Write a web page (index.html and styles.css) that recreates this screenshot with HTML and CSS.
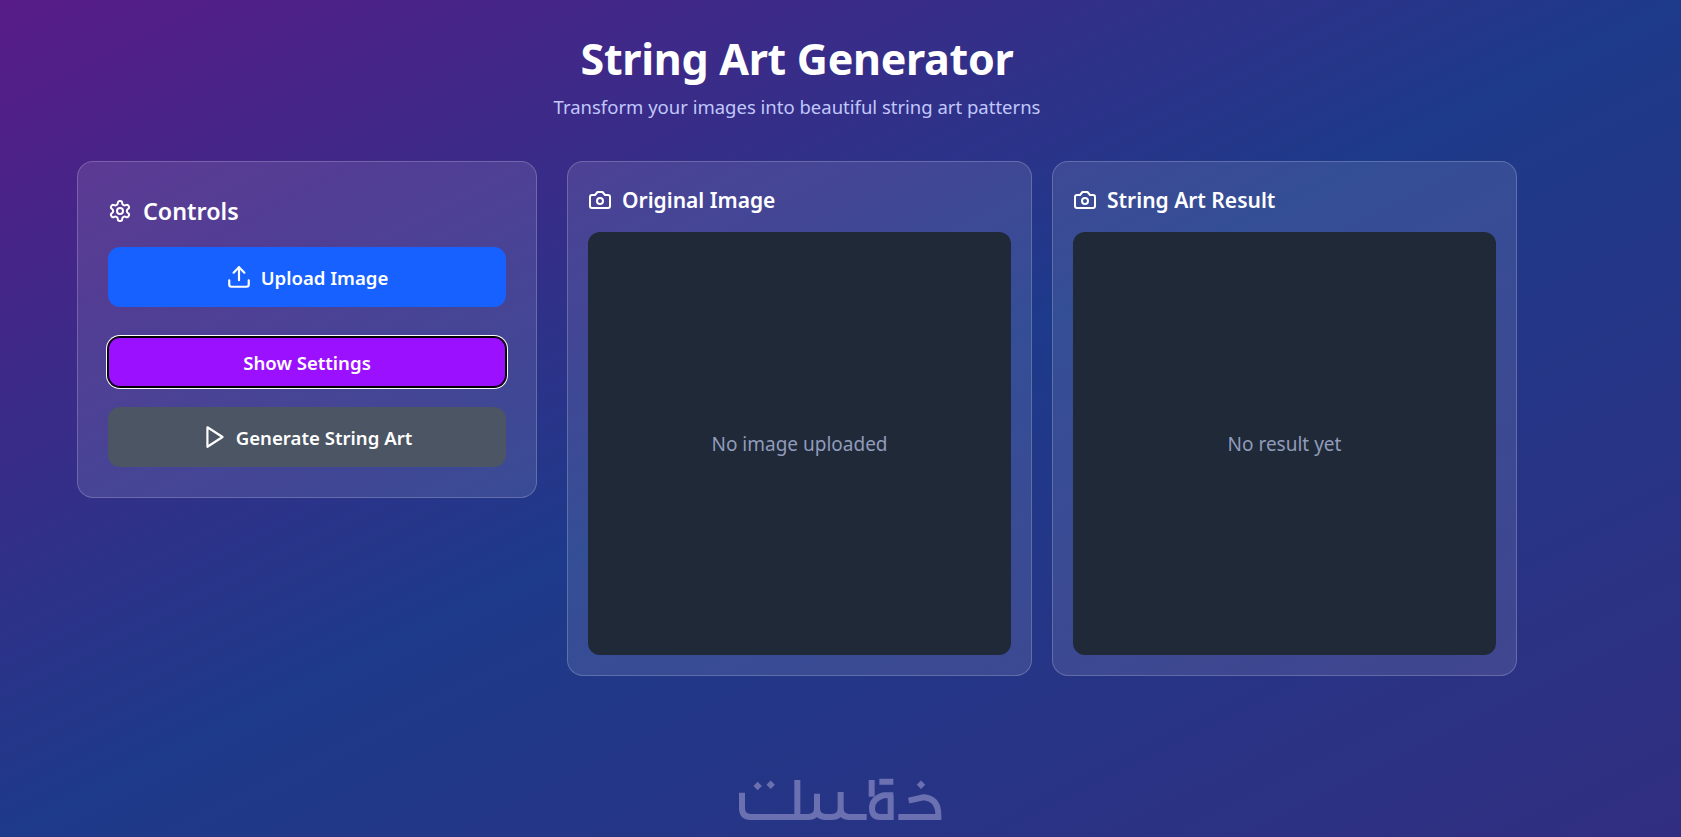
FILE: index.html
```html
<!DOCTYPE html>
<html lang="en">
<head>
  <meta charset="UTF-8">
  <meta name="viewport" content="width=device-width, initial-scale=1.0">
  <title>String Art Generator</title>
  <link rel="stylesheet" href="styles.css">
</head>
<body>

  <div class="container">
    <header class="header">
      <h1>String Art Generator</h1>
      <p>Transform your images into beautiful string art patterns</p>
    </header>

    <div class="columns">
      <section class="panel controls">
        <h2 class="controls-title">
          <svg class="icon" viewBox="0 0 24 24"><path d="M12.22 2h-.44a2 2 0 0 0-2 2v.18a2 2 0 0 1-1 1.73l-.43.25a2 2 0 0 1-2 0l-.15-.08a2 2 0 0 0-2.73.73l-.22.38a2 2 0 0 0 .73 2.73l.15.1a2 2 0 0 1 1 1.72v.51a2 2 0 0 1-1 1.74l-.15.09a2 2 0 0 0-.73 2.73l.22.38a2 2 0 0 0 2.73.73l.15-.08a2 2 0 0 1 2 0l.43.25a2 2 0 0 1 1 1.73V20a2 2 0 0 0 2 2h.44a2 2 0 0 0 2-2v-.18a2 2 0 0 1 1-1.73l.43-.25a2 2 0 0 1 2 0l.15.08a2 2 0 0 0 2.73-.73l.22-.39a2 2 0 0 0-.73-2.73l-.15-.08a2 2 0 0 1-1-1.74v-.5a2 2 0 0 1 1-1.74l.15-.09a2 2 0 0 0 .73-2.73l-.22-.38a2 2 0 0 0-2.73-.73l-.15.08a2 2 0 0 1-2 0l-.43-.25a2 2 0 0 1-1-1.73V4a2 2 0 0 0-2-2z"/><circle cx="12" cy="12" r="3"/></svg>
          Controls
        </h2>
        <button class="btn btn-upload">
          <svg class="icon" viewBox="0 0 24 24"><path d="M21 15v4a2 2 0 0 1-2 2H5a2 2 0 0 1-2-2v-4"/><polyline points="17 8 12 3 7 8"/><line x1="12" x2="12" y1="3" y2="15"/></svg>
          Upload Image
        </button>
        <button class="btn btn-settings">Show Settings</button>
        <button class="btn btn-generate">
          <svg class="icon" viewBox="0 0 24 24"><polygon points="5 3 19 12 5 21 5 3"/></svg>
          Generate String Art
        </button>
      </section>

      <section class="panel card">
        <h3 class="card-title">
          <svg class="icon" viewBox="0 0 24 24"><path d="M14.5 4h-5L7 7H4a2 2 0 0 0-2 2v9a2 2 0 0 0 2 2h16a2 2 0 0 0 2-2V9a2 2 0 0 0-2-2h-3l-2.5-3z"/><circle cx="12" cy="13" r="3"/></svg>
          Original Image
        </h3>
        <div class="preview">No image uploaded</div>
      </section>

      <section class="panel card">
        <h3 class="card-title">
          <svg class="icon" viewBox="0 0 24 24"><path d="M14.5 4h-5L7 7H4a2 2 0 0 0-2 2v9a2 2 0 0 0 2 2h16a2 2 0 0 0 2-2V9a2 2 0 0 0-2-2h-3l-2.5-3z"/><circle cx="12" cy="13" r="3"/></svg>
          String Art Result
        </h3>
        <div class="preview">No result yet</div>
      </section>
    </div>
  </div>

  <!-- watermark logo -->
  <svg class="watermark" viewBox="0 0 720 231">
    <path class="logo-line" d="M66 98V145Q66 171 92 171H232V60"/>
    <path class="logo-line" d="M232 171H265Q291 171 291 145V101M291 145Q291 171 317 171H336Q362 171 362 145V96M362 145Q362 171 388 171H440"/>
    <path class="logo-line" d="M455 60V110"/>
    <path class="logo-line" d="M478 65H520M520 106H490Q456 116 456 145Q456 171 480 171H512M512 106V180"/>
    <path class="logo-line" d="M535 171H655V165Q655 115 610 112L566 122"/>
    <rect class="logo-dot" x="104" y="69" width="18" height="18" transform="rotate(45 113 78)"/>
    <rect class="logo-dot" x="143" y="65" width="18" height="18" transform="rotate(45 152 74)"/>
    <rect class="logo-dot" x="594" y="65" width="18" height="18" transform="rotate(45 603 74)"/>
  </svg>

</body>
</html>
```

FILE: styles.css
```css
* {
  box-sizing: border-box;
}
html, body {
  height: 100%;
}
body {
  margin: 0;
  overflow: hidden;
  font-family: "Noto Sans", "Open Sans", sans-serif;
  color: #ffffff;
  background: linear-gradient(to bottom right, #581c87, #1e3a8a, #312e81);
}
.container {
  width: 1440px;
  margin-left: 77px;
  padding-top: 29px;
}
.header {
  text-align: center;
  margin-bottom: 40px;
}
.header h1 {
  margin: 0 0 4px;
  font-size: 43px;
  line-height: 60px;
  font-weight: 700;
  letter-spacing: -0.3px;
}
.header p {
  margin: 0;
  font-size: 18.5px;
  line-height: 28px;
  color: #c1c8fb;
}
.columns {
  display: flex;
  align-items: flex-start;
  gap: 20px;
}
.panel {
  background-color: rgba(255, 255, 255, 0.1);
  border: 1px solid rgba(255, 255, 255, 0.2);
  border-radius: 16px;
}
.controls {
  width: 460px;
  margin-right: 10px;
  padding: 31px 30px 30px;
  display: flex;
  flex-direction: column;
}
.card {
  width: 465px;
  padding: 20px;
}
.icon {
  width: 24px;
  height: 24px;
  flex: none;
  fill: none;
  stroke: currentColor;
  stroke-width: 2;
  stroke-linecap: round;
  stroke-linejoin: round;
}
.controls-title {
  display: flex;
  align-items: center;
  gap: 11px;
  margin: 0 0 18px;
  font-size: 23.3px;
  line-height: 36px;
  font-weight: 600;
}
.card-title {
  display: flex;
  align-items: center;
  gap: 10px;
  margin: 0 0 16px;
  padding-top: 2px;
  font-size: 21px;
  line-height: 32px;
  font-weight: 600;
}
.btn {
  display: flex;
  align-items: center;
  justify-content: center;
  gap: 8px;
  width: 100%;
  height: 60px;
  border: none;
  border-radius: 12px;
  color: #ffffff;
  font-family: inherit;
  font-size: 18.6px;
  font-weight: 600;
}
.btn .icon {
  width: 26px;
  height: 26px;
}
.btn-upload {
  gap: 9px;
  background-color: #1661ff;
  margin-bottom: 30px;
}
.btn-settings {
  height: 50px;
  background-color: #9b10ff;
  margin-bottom: 20px;
  box-shadow: inset 0 0 0 1px #000000, 0 0 0 1px #000000, 0 0 0 2px #ffffff;
}
.btn-generate {
  background-color: #4b5563;
}
.preview {
  display: flex;
  align-items: center;
  justify-content: center;
  width: 423px;
  height: 423px;
  border-radius: 12px;
  background-color: #1f2937;
  color: #919bbc;
  font-size: 19px;
}
.watermark {
  position: absolute;
  left: 720px;
  bottom: 0;
  width: 240px;
  height: 77px;
}
.logo-line {
  fill: none;
  stroke: #6a70b0;
  stroke-width: 18;
}
.logo-dot {
  fill: #6a70b0;
}
```
